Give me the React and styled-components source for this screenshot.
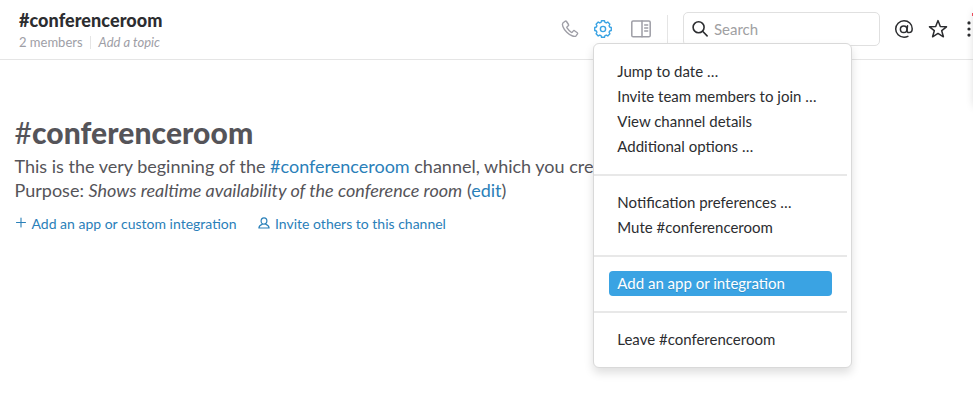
import React from "react";
import styled, { createGlobalStyle } from "styled-components";

const Global = createGlobalStyle`
  * { box-sizing: border-box; }
  html, body { margin: 0; padding: 0; background: #fff; overflow: hidden; }
  body { font-family: Lato, "Open Sans", sans-serif; color: #2c2d30; }
`;

const Page = styled.div`
  position: relative;
  width: 973px;
  height: 403px;
  overflow: hidden;
  background: #fff;
`;

const Header = styled.header`
  display: flex;
  height: 60px;
  padding-left: 19px;
  border-bottom: 1px solid #e5e5e5;
`;

const Heading = styled.div`
  flex: none;
  width: 542px;
  padding-top: 10px;
`;

const ChannelName = styled.h1`
  margin: 0;
  font-size: 18px;
  line-height: 20px;
  font-weight: 900;
  letter-spacing: 0.06px;
  white-space: nowrap;
`;

const Meta = styled.div`
  display: flex;
  align-items: center;
  margin-top: 3px;
  height: 18px;
  font-size: 13px;
  line-height: 18px;
  color: #9e9ea6;
`;

const Members = styled.span`
  padding-right: 7px;
  border-right: 1px solid #e5e5e5;
  line-height: 13px;
  white-space: nowrap;
`;

const Topic = styled.span`
  margin-left: 8px;
  font-style: italic;
  white-space: nowrap;
`;

const Tools = styled.div`
  display: flex;
  flex: none;
  align-items: flex-start;
  padding-top: 12px;
`;

const Tool = styled.span`
  display: flex;
  align-items: center;
  justify-content: center;
  flex: none;
  width: ${(p) => p.$w}px;
  height: 34px;
  color: ${(p) => p.$color || "#2c2d30"};
  svg { display: block; flex: none; overflow: visible; }
`;

const Rule = styled.span`
  width: 1px;
  height: 30px;
  margin: 3px 15px 0 13px;
  background: #e5e5e5;
`;

const Search = styled.div`
  display: flex;
  align-items: center;
  width: 197px;
  height: 34px;
  margin-right: 14px;
  padding-left: 8px;
  gap: 6px;
  border: 1px solid #e0e0e0;
  border-radius: 5px;
  font-size: 15px;
  color: #a0a0a2;
  svg { display: block; overflow: visible; color: #2c2d30; }
`;

const Intro = styled.main`
  padding: 56px 0 0 14.5px;
  color: #555459;
`;

const Title = styled.h2`
  margin: 0;
  font-size: 30px;
  line-height: 32px;
  font-weight: 900;
  letter-spacing: 0.08px;
  white-space: nowrap;
`;

const Hash = styled.span`
  font-weight: 400;
`;

const Line = styled.p`
  margin: 0;
  font-size: 18px;
  line-height: 24px;
  white-space: nowrap;
`;

const Lines = styled.div`
  margin-top: 6px;
`;

const Link = styled.a`
  color: #2a80b9;
`;

const Actions = styled.div`
  display: flex;
  margin-top: 11px;
  gap: 21.5px;
`;

const Action = styled.a`
  display: flex;
  align-items: center;
  height: 20px;
  gap: 5px;
  font-size: 14px;
  color: #2a80b9;
  white-space: nowrap;
  svg { display: block; overflow: visible; }
`;

const Menu = styled.ul`
  position: absolute;
  left: 593px;
  top: 43px;
  width: 259px;
  height: 325px;
  margin: 0;
  padding: 15px 0 0;
  list-style: none;
  background: #fff;
  border: 1px solid #d9d9d9;
  border-radius: 6px;
  box-shadow: 0 5px 10px rgba(0, 0, 0, 0.13);
`;

const Item = styled.li`
  width: 223px;
  height: 25px;
  margin-left: 15px;
  padding-left: 8.3px;
  border-radius: 4px;
  font-size: 15px;
  line-height: 25px;
  white-space: nowrap;
  color: ${(p) => (p.$active ? "#fff" : "#2c2d30")};
  background: ${(p) => (p.$active ? "#3aa3e3" : "transparent")};
  text-shadow: ${(p) => (p.$active ? "0 1px 0 rgba(0, 0, 0, 0.15)" : "none")};
`;

const Divider = styled.li`
  height: 2px;
  width: 253px;
  margin: 15px 0 14px;
  background: #e8e8e8;
`;

const EdgeShade = styled.div`
  position: absolute;
  left: 975px;
  top: 12px;
  width: 20px;
  height: 94px;
  box-shadow: 0 0 10px rgba(0, 0, 0, 0.2);
`;

const Badge = styled.div`
  position: absolute;
  left: 972px;
  top: 13px;
  width: 8px;
  height: 3px;
  background: #eb4d5c;
`;

const groups = [
  ["Jump to date …", "Invite team members to join …", "View channel details", "Additional options …"],
  ["Notification preferences …", "Mute #conferenceroom"],
  ["Add an app or integration"],
  ["Leave #conferenceroom"],
];

const gear = (() => {
  const n = 8;
  const at = (r, a) => `${(10 + r * Math.cos(a)).toFixed(2)} ${(10 + r * Math.sin(a)).toFixed(2)}`;
  let d = "";
  for (let i = 0; i < n; i++) {
    const a = (i * 2 * Math.PI) / n - Math.PI / 2;
    d += `${i ? "L" : "M"}${at(6.9, a - 0.29)} L${at(8.4, a - 0.18)} L${at(8.4, a + 0.18)} L${at(6.9, a + 0.29)} `;
  }
  return d + "Z";
})();

const stroke = { fill: "none", stroke: "currentColor", strokeLinecap: "round", strokeLinejoin: "round" };

const Phone = () => (
  <svg width="18" height="18" viewBox="0 0 18 18" {...stroke} strokeWidth="1.4">
    <path d="M4.1 1.3 1.9 3C.8 4.1 1.6 8 5.8 12.2S13.9 17 15 15.9l1.5-2c.3-.5.2-.9-.2-1.200l-2.800-2c-.5-.3-.9-.2-1.200.2l-1 1.200c-.3.4-.7.4-1.100.1C8.700 11 7 9.300 6 7.800c-.3-.4-.3-.8.1-1.100l1.200-1c.4-.3.500-.7.200-1.200l-2-3c-.3-.4-.9-.5-1.400-.2Z" />
  </svg>
);
const Gear = () => (
  <svg width="20" height="20" viewBox="0 0 20 20" {...stroke} strokeWidth="1.4">
    <path d={gear} />
    <circle cx="10" cy="10" r="2.6" />
  </svg>
);
const Panel = () => (
  <svg width="20" height="18" viewBox="0 0 20 18" {...stroke} strokeWidth="1.5">
    <rect x=".8" y="1" width="18.4" height="15.8" rx="1.3" />
    <path d="M11 1V16.800M13.700 5h3M13.700 8h3M13.700 11h3" />
  </svg>
);
const Lens = () => (
  <svg width="16" height="16" viewBox="0 0 16 16" {...stroke} strokeWidth="1.6">
    <circle cx="6.600" cy="6.300" r="5.500" />
    <path d="m10.600 10.300 4.500 4.600" />
  </svg>
);
const At = () => (
  <svg width="20" height="20" viewBox="0 0 20 20" {...stroke} strokeWidth="1.5">
    <circle cx="9.700" cy="10.200" r="3.300" />
    <path d="M13.500 6.800 13 11.300c-.1 1.500.6 2.300 1.900 2.300 1.900 0 3.300-1.700 3.300-3.900C18.200 5 14.500 1.800 10 1.800S1.700 5.500 1.700 10s3.700 8.300 8.300 8.300c1.400 0 2.700-.3 3.900-.9" />
  </svg>
);
const Star = () => (
  <svg width="20" height="20" viewBox="0 0 20 20" {...stroke} strokeWidth="1.5">
    <path d="m10 1.600 2.300 5.900 6.200.3-4.800 3.900 1.700 6.100L10 14.400l-5.400 3.400 1.700-6.100-4.800-3.900 6.200-.3Z" />
  </svg>
);
const Dots = () => (
  <svg width="4" height="18" viewBox="0 0 4 18" fill="currentColor">
    <circle cx="2" cy="2.900" r="1.600" />
    <circle cx="2" cy="9" r="1.600" />
    <circle cx="2" cy="15.100" r="1.600" />
  </svg>
);
const Plus = () => (
  <svg width="12" height="12" viewBox="0 0 12 12" {...stroke} strokeWidth="1.1">
    <path d="M1.500 5.500h9M6 1v9" />
  </svg>
);
const Person = () => (
  <svg width="12" height="13" viewBox="0 0 12 13" {...stroke} strokeWidth="1.200">
    <ellipse cx="6" cy="4" rx="2.900" ry="3.200" />
    <path d="M4.300 7.200C2.300 8 .9 8.800.9 11h10.200c0-2.200-1.400-3-3.400-3.800" />
  </svg>
);

export default function App() {
  return (
    <Page>
      <Global />
      <Header>
        <Heading>
          <ChannelName>#conferenceroom</ChannelName>
          <Meta>
            <Members>2 members</Members>
            <Topic>Add a topic</Topic>
          </Meta>
        </Heading>
        <Tools>
          <Tool $w={17} $color="#9e9ea6"><Phone /></Tool>
          <Tool $w={50} $color="#3aa3e3"><Gear /></Tool>
          <Tool $w={26} $color="#9e9ea6"><Panel /></Tool>
          <Rule />
          <Search><Lens />Search</Search>
          <Tool $w={20}><At /></Tool>
          <Tool $w={48}><Star /></Tool>
          <Tool $w={14}><Dots /></Tool>
        </Tools>
      </Header>
      <Intro>
        <Title><Hash>#</Hash>conferenceroom</Title>
        <Lines>
          <Line>This is the very beginning of the <Link>#conferenceroom</Link> channel, which you created</Line>
          <Line>Purpose: <em>Shows realtime availability of the conference room</em> (<Link>edit</Link>)</Line>
        </Lines>
        <Actions>
          <Action><Plus />Add an app or custom integration</Action>
          <Action><Person />Invite others to this channel</Action>
        </Actions>
      </Intro>
      <Menu>
        {groups.map((items, g) => (
          <React.Fragment key={g}>
            {g > 0 && <Divider />}
            {items.map((t) => <Item key={t} $active={g === 2}>{t}</Item>)}
          </React.Fragment>
        ))}
      </Menu>
      <EdgeShade />
      <Badge />
    </Page>
  );
}
